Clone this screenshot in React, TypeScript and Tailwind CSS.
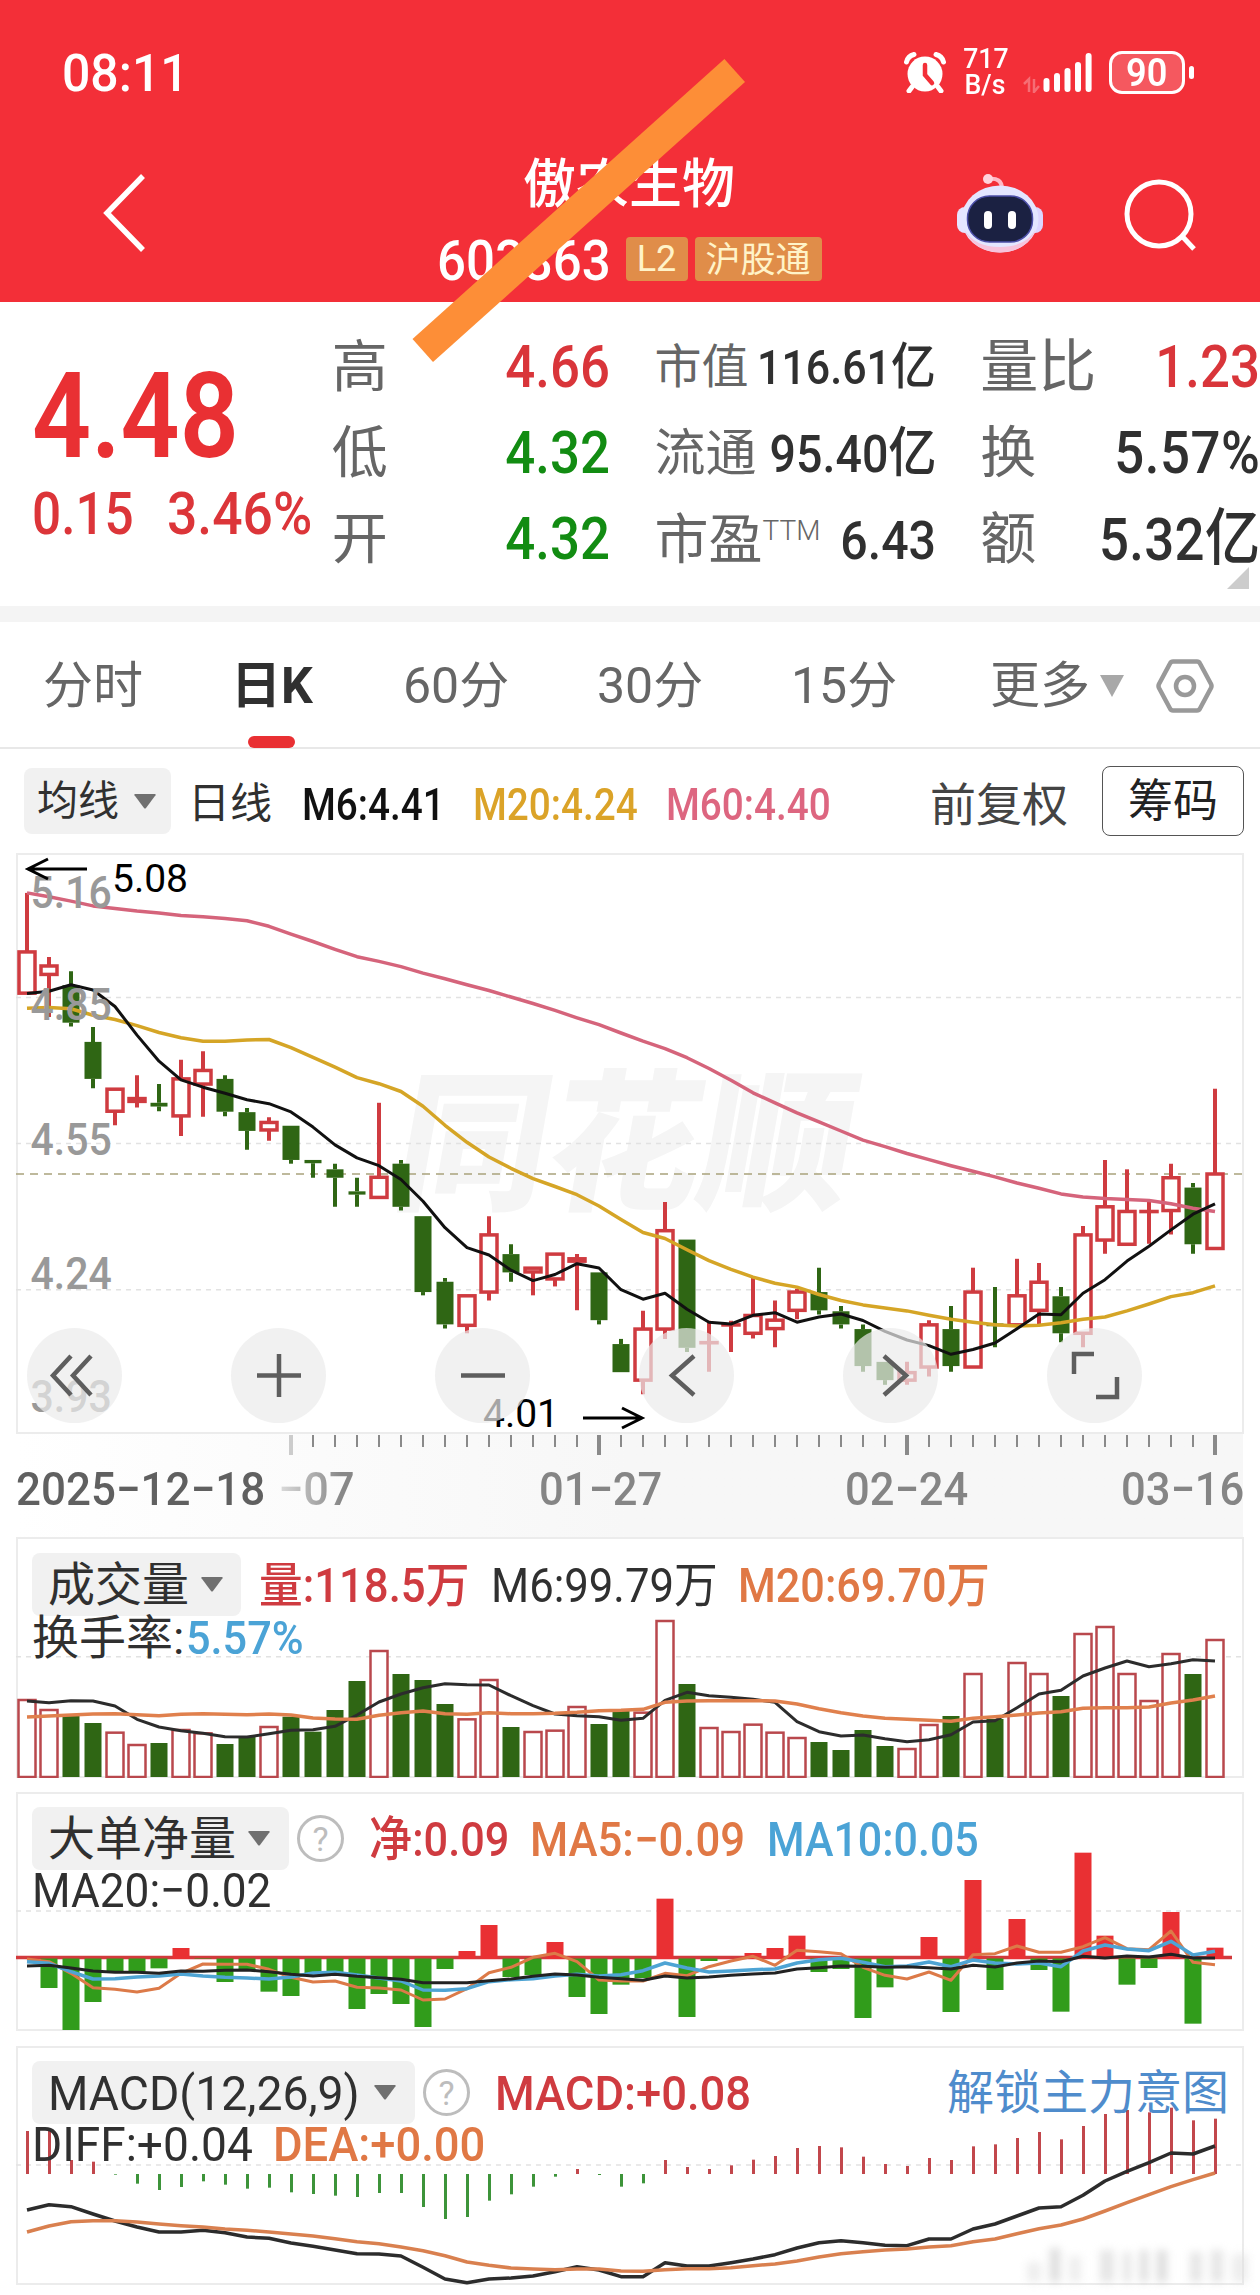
import type { ReactNode } from 'react';

type Candle = [up: 0 | 1, high: number, top: number, bottom: number, low: number];

const RED = '#cf3b40';
const GREEN = '#2f6614';
const STEP = 22;
const cx = (i: number) => 11 + i * STEP;

// price -> y inside the K line panel
const py = (p: number) => 39.9 + (5.08 - p) * 468.5;
// averages are stored on the chart's own sampling grid
const ky = (v: number) => v / 2.306 - 13;

const candles: Candle[] = [
  [1, 5.08, 4.954, 4.866, 4.866], [1, 4.943, 4.924, 4.906, 4.815], [0, 4.913, 4.883, 4.803, 4.795],
  [0, 4.794, 4.762, 4.683, 4.663], [1, 4.661, 4.661, 4.614, 4.584], [1, 4.691, 4.641, 4.635, 4.622],
  [0, 4.672, 4.632, 4.624, 4.614], [1, 4.724, 4.683, 4.604, 4.561], [1, 4.742, 4.701, 4.672, 4.602],
  [0, 4.691, 4.683, 4.613, 4.603], [0, 4.621, 4.612, 4.572, 4.532], [1, 4.601, 4.59, 4.574, 4.551],
  [0, 4.583, 4.583, 4.51, 4.502], [0, 4.51, 4.51, 4.503, 4.472], [0, 4.502, 4.49, 4.472, 4.41],
  [0, 4.472, 4.443, 4.436, 4.41], [1, 4.632, 4.473, 4.43, 4.43], [0, 4.51, 4.502, 4.41, 4.402],
  [0, 4.39, 4.39, 4.228, 4.221], [0, 4.258, 4.25, 4.159, 4.15], [1, 4.22, 4.22, 4.157, 4.14],
  [1, 4.39, 4.35, 4.228, 4.21], [0, 4.33, 4.309, 4.27, 4.25], [1, 4.279, 4.279, 4.271, 4.221],
  [1, 4.309, 4.309, 4.256, 4.24], [1, 4.309, 4.299, 4.294, 4.189], [0, 4.27, 4.27, 4.168, 4.159],
  [0, 4.128, 4.117, 4.057, 4.057], [1, 4.188, 4.149, 4.04, 4.01], [1, 4.42, 4.359, 4.149, 4.128],
  [0, 4.34, 4.34, 4.109, 4.1], [1, 4.167, 4.12, 4.12, 4.058], [1, 4.167, 4.158, 4.158, 4.1],
  [1, 4.258, 4.178, 4.14, 4.129], [1, 4.21, 4.168, 4.15, 4.11], [1, 4.235, 4.228, 4.189, 4.17],
  [0, 4.28, 4.228, 4.189, 4.18], [0, 4.198, 4.187, 4.159, 4.15], [0, 4.159, 4.149, 4.07, 4.058],
  [0, 4.079, 4.079, 4.04, 4.03], [1, 4.079, 4.056, 4.04, 4.03], [1, 4.168, 4.158, 4.068, 4.048],
  [0, 4.198, 4.149, 4.07, 4.058], [1, 4.28, 4.228, 4.068, 4.068], [0, 4.239, 4.161, 4.155, 4.11],
  [1, 4.299, 4.22, 4.158, 4.158], [1, 4.29, 4.249, 4.189, 4.158], [0, 4.239, 4.219, 4.14, 4.121],
  [1, 4.369, 4.35, 4.14, 4.11], [1, 4.51, 4.41, 4.339, 4.31], [1, 4.49, 4.4, 4.33, 4.33],
  [1, 4.42, 4.4, 4.4, 4.331], [1, 4.502, 4.472, 4.402, 4.351], [0, 4.461, 4.451, 4.33, 4.31],
  [1, 4.662, 4.48, 4.321, 4.321],
];

const m6 = [354, 349, 334, 346, 384, 450, 510, 553, 570, 584, 599, 608, 627, 662, 703, 733, 751, 783, 833, 894, 940, 957, 992, 1016, 1002, 977, 987, 1037, 1059, 1045, 1082, 1112, 1116, 1096, 1090, 1112, 1100, 1093, 1108, 1133, 1153, 1166, 1186, 1175, 1160, 1127, 1093, 1095, 1045, 1014, 971, 937, 899, 863, 839];
const m20 = [388, 386, 389, 404, 414, 428, 444, 456, 464, 464, 461, 460, 479, 501, 524, 548, 562, 580, 614, 658, 697, 731, 757, 781, 799, 818, 844, 875, 905, 919, 945, 970, 990, 1008, 1022, 1031, 1048, 1062, 1072, 1079, 1086, 1096, 1105, 1112, 1118, 1121, 1119, 1113, 1105, 1100, 1086, 1070, 1053, 1044, 1028];
const m60 = [122, 131, 141, 152, 158, 164, 168, 174, 177, 181, 186, 199, 217, 234, 252, 269, 280, 292, 307, 320, 334, 347, 362, 377, 393, 410, 426, 445, 464, 481, 502, 527, 554, 583, 606, 629, 650, 671, 692, 707, 723, 737, 751, 764, 777, 791, 803, 816, 823, 827, 829, 831, 839, 849, 857];

const vol = [537, 567, 585, 609, 635, 672, 669, 627, 637, 672, 651, 618, 590, 635, 570, 483, 390, 462, 480, 552, 595, 477, 621, 633, 629, 558, 612, 573, 575, 300, 492, 621, 633, 611, 635, 651, 666, 690, 630, 678, 684, 612, 588, 459, 597, 426, 459, 528, 339, 318, 459, 540, 399, 462, 357];
const volM6 = [543, 548, 542, 543, 558, 598, 621, 632, 640, 650, 651, 641, 631, 629, 619, 585, 546, 522, 503, 491, 494, 495, 527, 557, 582, 587, 590, 601, 595, 541, 517, 527, 532, 538, 547, 605, 635, 648, 645, 656, 665, 659, 644, 606, 602, 563, 522, 511, 468, 444, 423, 440, 431, 419, 423];
const volM20 = [591, 588, 585, 582, 581, 584, 587, 583, 581, 583, 584, 582, 585, 594, 597, 598, 586, 578, 573, 581, 583, 578, 581, 581, 580, 577, 572, 571, 568, 547, 543, 542, 542, 542, 543, 552, 566, 578, 588, 595, 598, 601, 604, 595, 590, 585, 579, 575, 565, 563, 563, 561, 549, 540, 528];

const net = [533, 624, 750, 666, 579, 575, 565, 504, 537, 606, 570, 635, 648, 579, 585, 687, 642, 672, 741, 567, 513, 435, 591, 585, 486, 651, 702, 614, 594, 356, 711, 543, 533, 519, 504, 467, 576, 567, 714, 622, 533, 471, 696, 300, 630, 417, 570, 695, 218, 467, 614, 564, 396, 731, 503];
const netM5 = [537, 545, 580, 623, 628, 636, 625, 580, 552, 553, 553, 568, 592, 606, 603, 622, 624, 630, 660, 657, 626, 578, 562, 532, 520, 545, 600, 603, 603, 580, 587, 560, 543, 529, 556, 511, 515, 521, 562, 586, 597, 576, 601, 524, 521, 498, 517, 517, 500, 473, 506, 509, 453, 547, 554];
const netM10 = [545, 550, 575, 597, 596, 591, 588, 582, 588, 592, 594, 597, 591, 579, 577, 585, 594, 603, 630, 631, 626, 605, 599, 596, 588, 583, 588, 584, 572, 549, 564, 576, 573, 569, 567, 549, 539, 535, 547, 560, 558, 546, 560, 540, 549, 552, 549, 560, 513, 495, 507, 512, 484, 525, 514];
const netM20 = [558, 556, 564, 573, 577, 577, 580, 573, 574, 571, 570, 575, 583, 588, 583, 589, 593, 598, 608, 608, 608, 602, 597, 589, 582, 585, 592, 596, 601, 588, 594, 591, 586, 582, 579, 567, 563, 558, 559, 562, 560, 563, 567, 556, 561, 549, 543, 545, 529, 534, 528, 531, 523, 534, 534];

const macd = [1053, 1047, 1140, 1145, 1184, 1211, 1230, 1221, 1204, 1214, 1226, 1223, 1237, 1242, 1247, 1251, 1239, 1239, 1281, 1317, 1311, 1262, 1243, 1220, 1190, 1167, 1185, 1220, 1210, 1140, 1161, 1167, 1156, 1139, 1128, 1104, 1098, 1102, 1130, 1152, 1158, 1134, 1140, 1099, 1093, 1074, 1056, 1078, 1038, 1002, 990, 997, 983, 1021, 1016];
const diff = [1290, 1274, 1280, 1302, 1323, 1341, 1356, 1356, 1351, 1358, 1371, 1375, 1389, 1399, 1410, 1421, 1422, 1428, 1462, 1497, 1508, 1497, 1494, 1488, 1475, 1460, 1470, 1490, 1490, 1448, 1458, 1458, 1448, 1437, 1424, 1404, 1388, 1382, 1388, 1396, 1397, 1377, 1377, 1347, 1332, 1308, 1284, 1280, 1246, 1203, 1174, 1148, 1119, 1122, 1098];
const dea = [1356, 1338, 1325, 1322, 1322, 1326, 1332, 1337, 1341, 1347, 1351, 1356, 1362, 1368, 1376, 1385, 1391, 1401, 1412, 1427, 1446, 1456, 1464, 1467, 1469, 1467, 1467, 1473, 1474, 1469, 1466, 1466, 1463, 1457, 1452, 1443, 1431, 1421, 1415, 1410, 1407, 1401, 1397, 1385, 1377, 1361, 1346, 1335, 1317, 1293, 1268, 1244, 1220, 1199, 1179];

function Line({ data, y, color, w = 3.5 }: { data: number[]; y: (v: number) => number; color: string; w?: number }) {
  return (
    <polyline
      points={data.map((v, i) => `${cx(i)},${y(v).toFixed(1)}`).join(' ')}
      fill="none"
      stroke={color}
      strokeWidth={w}
      strokeLinejoin="round"
    />
  );
}

function Grid({ y, color = '#e2e2e2', dash = '5 5' }: { y: number; color?: string; dash?: string }) {
  return <line x1="0" x2="1227" y1={y} y2={y} stroke={color} strokeWidth="1.5" strokeDasharray={dash} />;
}

function Caret({ className = '' }: { className?: string }) {
  return (
    <svg viewBox="0 0 22 15" className={`w-[22px] h-[15px] shrink-0 ${className}`}>
      <path d="M1 0h20q1 0 .5 1.2L12 14q-1 1.2-2 0L.5 1.2Q0 0 1 0Z" fill="currentColor" />
    </svg>
  );
}

function Help({ className = '' }: { className?: string }) {
  return (
    <div className={`w-[47px] h-[47px] shrink-0 rounded-full border-3 border-[#bdbdbd] text-[#bdbdbd] text-[34px] flex items-center justify-center ${className}`}>
      ?
    </div>
  );
}

function Panel({ className, children }: { className: string; children: ReactNode }) {
  return (
    <div className={`relative ml-4 w-[1228px] shadow-[inset_0_0_0_2px_#ececec] ${className}`}>{children}</div>
  );
}

function Header() {
  return (
    <header className="relative h-[302px] bg-[#f32f38] text-white">
      {/* Status bar */}
      <div className="flex items-center h-[144px] pl-[62px]">
        <span className="w-[842px] pt-[4px] text-[52px] leading-none font-medium origin-left scale-x-[.96]">08:11</span>
        <svg viewBox="0 0 42 42" className="w-[42px] h-[42px]">
          <circle cx="21" cy="23" r="17.5" fill="#fff" />
          <path d="M2.5 11Q4 5 10 3.500M39.500 11Q38 5 32 3.500M8 36l-3 4M34 36l3 4" stroke="#fff" strokeWidth="5" strokeLinecap="round" fill="none" />
          <path d="M21 14v10l7 8" stroke="#f32f38" strokeWidth="4.500" strokeLinecap="round" fill="none" />
        </svg>
        <div className="ml-[16px] w-[46px] text-[28px] leading-[28px] text-center scale-x-[.95] font-medium">
          <div>717</div>
          <div className="-mt-[2px]">B/s</div>
        </div>
        <svg viewBox="0 0 72 42" className="ml-[15px] w-[72px] h-[42px]">
          <g stroke="#fff" strokeOpacity=".3" strokeWidth="2.500" fill="none">
            <path d="M1 33l5-5v13M11 28v13l5-6" />
          </g>
          <g stroke="#fff" strokeWidth="6" strokeLinecap="round">
            <path d="M23.500 30v8M34 25v13M44.500 20v18M55 14v24M65.600 5v33" />
          </g>
        </svg>
        <div className="ml-[14px] w-[76px] h-[43px] rounded-[13px] border-[3.500px] border-white bg-white/20 flex items-center justify-center text-[38px] leading-none font-semibold">
          <span className="scale-x-[.95] pt-[2px]">90</span>
        </div>
        <div className="ml-[4px] w-[5px] h-[13px] rounded-full bg-white" />
      </div>

      {/* Title bar */}
      <div className="flex pl-[103px]">
        <svg viewBox="0 0 44 80" className="mt-[29px] w-[44px] h-[80px]">
          <path d="M40 3L4 40l36 37" stroke="#fff" strokeWidth="5.500" fill="none" />
        </svg>
        <div className="ml-[232px] w-[500px] flex flex-col items-center">
          <h1 className="mt-[15px] text-[53px] leading-none font-medium">傲农生物</h1>
          <div className="mt-[25px] flex items-center h-[44px] w-[385px]">
            <span className="w-[189px] shrink-0 pt-[3px] text-[56px] leading-none font-medium origin-left scale-x-[.91]">603363</span>
            <span className="w-[62px] h-[44px] rounded-[4px] bg-[#e08d49] text-[#fff3c8] text-[36px] leading-[45px] text-center">L2</span>
            <span className="ml-[7px] w-[127px] h-[44px] rounded-[4px] bg-[#e08d49] text-[#fff3c8] text-[35px] leading-[47px] text-center">沪股通</span>
          </div>
        </div>
        <svg viewBox="0 0 86 80" className="ml-[78px] mt-[29px] w-[86px] h-[80px]">
          <path d="M31 6q14-2 14 10" stroke="#ffb9c6" strokeWidth="4" fill="none" />
          <circle cx="31" cy="6" r="5" fill="#ffd3dc" />
          <rect x="0" y="34" width="16" height="26" rx="8" fill="#e6e4ff" />
          <rect x="70" y="34" width="16" height="26" rx="8" fill="#dcd6ff" />
          <ellipse cx="43" cy="46" rx="38.500" ry="33.500" fill="#e4e6ff" />
          <path d="M7 56q10 23 36 23.500Q70 79 79 56q-10 18-36 18T7 56Z" fill="#f7c3dc" />
          <rect x="10.500" y="23" width="65" height="46" rx="22" fill="#1b2142" stroke="#4c4fa8" strokeWidth="1.500" />
          <rect x="27" y="38" width="8" height="18" rx="4" fill="#fff" />
          <rect x="51" y="38" width="8" height="18" rx="4" fill="#fff" />
        </svg>
        <svg viewBox="0 0 74 74" className="ml-[80px] mt-[35px] w-[74px] h-[74px]">
          <circle cx="36" cy="35" r="32" stroke="#fff" strokeWidth="5" fill="none" />
          <path d="M58 56l13 14" stroke="#fff" strokeWidth="5" />
        </svg>
      </div>

      {/* Marker stroke over the stock code */}
      <svg viewBox="0 0 340 310" className="absolute left-[410px] top-[56px] w-[340px] h-[310px] z-10">
        <path d="M314.400 3L335 26 23 306 2.500 283Z" fill="#fd8e37" />
      </svg>
    </header>
  );
}

function Row({ className = '', label, children }: { className?: string; label: ReactNode; children: ReactNode }) {
  return (
    <div className={`flex justify-between whitespace-nowrap ${className}`}>
      {label}
      {/* the digits are condensed towards the right edge, so the box may reach under the label */}
      <span className="-ml-10 origin-right scale-x-[.895]">{children}</span>
    </div>
  );
}

function Quote() {
  const big = 'text-[56px] font-normal text-[#666]';
  const mid = 'font-normal text-[#666]';
  return (
    <section className="relative flex h-[304px] text-[#303030]">
      <div className="w-[333px] pl-[32px] pt-[56px] text-[#e93033]">
        <div className="text-[119px] leading-[118px] font-semibold origin-left scale-x-[.87]">4.48</div>
        <div className="mt-[8px] flex text-[59px] leading-[59px] font-medium text-[#dc3539]">
          <span className="w-[135px] origin-left scale-x-[.87]">0.15</span>
          <span className="origin-left scale-x-[.905]">3.46%</span>
        </div>
      </div>
      <div className="w-[279px] -ml-px pt-[22px] text-[59px] leading-[86px] font-medium">
        <Row className="text-[#d9353a]" label={<span className={big}>高</span>}>4.66</Row>
        <Row className="text-[#128c12]" label={<span className={big}>低</span>}>4.32</Row>
        <Row className="text-[#128c12]" label={<span className={big}>开</span>}>4.32</Row>
      </div>
      <div className="ml-[44px] w-[282px] pt-[22px] leading-[86px] font-medium">
        <Row className="text-[48px]" label={<span className="text-[47px] font-normal text-[#666]">市值</span>}>116.61<span className="text-[50px]">亿</span></Row>
        <Row className="text-[52px]" label={<span className="text-[51px] font-normal text-[#666]">流通</span>}>95.40<span className="text-[54px]">亿</span></Row>
        <Row
          className="text-[54px]"
          label={
            <span className={`flex ${mid}`}>
              市盈<span className="text-[28px] leading-[66px] font-light">TTM</span>
            </span>
          }
        >
          6.43
        </Row>
      </div>
      <div className="ml-[44px] w-[280px] pt-[22px] text-[59px] leading-[86px] font-medium">
        <Row className="text-[#d9353a]" label={<span className="text-[58px] font-normal text-[#666]">量比</span>}>1.23</Row>
        <Row label={<span className={big}>换</span>}><span className="tracking-[.01em]">5.57%</span></Row>
        <Row label={<span className={big}>额</span>}><span className="tracking-[.005em]">5.32<span className="text-[62px]">亿</span></span></Row>
      </div>
      <svg viewBox="0 0 22 22" className="absolute right-[11px] bottom-[17px] w-[22px] h-[22px]">
        <path d="M22 0v22H0Z" fill="#ccc" />
      </svg>
    </section>
  );
}

function Tabs() {
  return (
    <nav className="flex items-center h-[127px] pt-[5px] pl-[43px] pb-[2px] border-b-2 border-[#e8e8e8] text-[50px] leading-none text-[#666]">
      <span className="w-[188px]">分时</span>
      <span className="relative w-[172px] font-bold text-[#303030]">
        日K
        <span className="absolute left-[17px] top-[75px] w-[47px] h-[12px] rounded-full bg-[#e93033]" />
      </span>
      <span className="w-[194px]">60分</span>
      <span className="w-[194px]">30分</span>
      <span className="w-[199px]">15分</span>
      <span className="w-[109px]">更多</span>
      <svg viewBox="0 0 26 22" className="w-[26px] h-[22px]">
        <path d="M1 0h24l-12 22Z" fill="#a8a8a8" />
      </svg>
      <svg viewBox="0 0 58 54" className="ml-[31px] w-[58px] h-[54px]">
        <path d="M17 2.500h24q2 0 3 2L55 25q1 2 0 4L44 49.500q-1 2-3 2H17q-2 0-3-2L3 29q-1-2 0-4L14 4.500q1-2 3-2Z" stroke="#999" strokeWidth="4.500" fill="none" />
        <circle cx="29" cy="27" r="9" stroke="#999" strokeWidth="4.500" fill="none" />
      </svg>
    </nav>
  );
}

function Legend() {
  return (
    <div className="flex items-center h-[104px] pl-[24px] text-[44px] leading-none font-medium whitespace-nowrap">
      <div className="flex items-center w-[147px] h-[66px] rounded-[8px] bg-[#f1f1f1] pl-[13px] text-[41px] font-normal text-[#303030]">
        均线
        <Caret className="ml-[15px] text-[#707070]" />
      </div>
      <span className="ml-[17px] w-[114px] pt-[6px] text-[42px] font-normal text-[#303030]">日线</span>
      <span className="w-[171px] pt-[7px] text-[#111] origin-left scale-x-[.88]">M6:4.41</span>
      <span className="w-[193px] pt-[7px] text-[#dba328] origin-left scale-x-[.88]">M20:4.24</span>
      <span className="w-[264px] pt-[7px] text-[#dd6680] origin-left scale-x-[.88]">M60:4.40</span>
      <span className="w-[172px] pt-[8px] text-[46px] font-normal text-[#444]">前复权</span>
      <div className="w-[142px] h-[70px] rounded-[8px] border-[1.500px] border-[#555] text-[45px] leading-[70px] text-center font-normal text-[#222]">筹码</div>
    </div>
  );
}

const priceLabels: [string, number][] = [['5.16', 55], ['4.85', 167], ['4.55', 302], ['4.24', 436], ['3.93', 559]];
const buttons = [
  'M44 28L26 47.500 44 67M64 28L46 47.500 64 67',
  'M26 47.500h44M48 26v43',
  'M26 47.500h44',
  'M55 28L33 47.500 55 67',
  'M41 28L63 47.500 41 67',
  'M47 26H27v20M49 69h21V49',
];

function KLine() {
  return (
    <Panel className="h-[581px]">
      <svg viewBox="0 0 1227 581" className="absolute inset-0 w-[1227px] h-[581px]">
        <text x="388" y="345" fontSize="152" fontWeight="900" fill="#f5f5f5" textLength="456" transform="translate(46 0) skewX(-10)">同花顺</text>
        <Grid y={144.400} />
        <Grid y={290.600} />
        <Grid y={436.700} />
        <Grid y={321} color="#a9a27c" dash="8 6" />
        {candles.map(([up, h, t, b, l], i) => {
          const x = cx(i);
          const color = up ? RED : GREEN;
          return (
            <g key={i} fill={color} stroke={color}>
              <path d={`M${x} ${py(h)}V${py(t)}M${x} ${py(b)}V${py(l)}`} strokeWidth="4" />
              {up ? (
                <rect x={x - 8} y={py(t)} width="16" height={Math.max(0.1, py(b) - py(t))} fill="#fff" strokeWidth="3.500" />
              ) : (
                <rect x={x - 8.500} y={py(t)} width="17" height={py(b) - py(t)} stroke="none" />
              )}
            </g>
          );
        })}
        <Line data={m60} y={ky} color="#d5647b" />
        <Line data={m20} y={ky} color="#d5a526" />
        <Line data={m6} y={ky} color="#111" w={3} />
        <g fontSize="45" fontWeight="500" fill="#999" transform="scale(.91 1)">
          {priceLabels.map(([s, y]) => (
            <text key={s} x="16" y={y}>{s}</text>
          ))}
        </g>
        <g fontSize="39" fill="#000">
          <text x="96" y="39">5.08</text>
          <text x="467" y="574">4.01</text>
        </g>
        <path d="M71 16H12M32 6L12 16 32 26M567 565h59M606 555l20 10-20 10" stroke="#000" strokeWidth="3" fill="none" />
      </svg>
      <div className="absolute left-[11px] top-[475px] flex gap-[109px]">
        {buttons.map((d) => (
          <svg key={d} viewBox="0 0 95 95" className="w-[95px] h-[95px] rounded-full bg-[#ebebeb]/70">
            <path d={d} stroke="#5e5e5e" strokeWidth="4.500" fill="none" />
          </svg>
        ))}
      </div>
    </Panel>
  );
}

function DateAxis() {
  return (
    <div className="ml-4 w-[1227px] h-[103px] bg-gradient-to-r from-white via-[#f7f7f7] to-[#f7f7f7] text-[46px] leading-none font-medium text-[#858585]">
      <svg viewBox="0 0 1227 22" className="block w-[1227px] h-[22px]">
        {candles.map((_, i) => {
          if (i < 12) return null;
          const major = (i - 12) % 14 === 0;
          return (
            <line key={i} x1={cx(i)} x2={cx(i)} y1="1" y2={major ? 21 : 13} stroke={i === 12 ? '#ccc' : '#8a8a8a'} strokeWidth={major ? 4 : 2} />
          );
        })}
      </svg>
      <div className="flex mt-[10px] leading-[46px] whitespace-nowrap">
        <span className="w-[263px] text-[#606060] origin-left scale-x-[.955]">2025−12−18</span>
        <span className="w-[258px] text-transparent bg-clip-text bg-gradient-to-r from-[#ddd] from-0% to-[#888] to-25% origin-left scale-x-[.98]">−07</span>
        <span className="ml-[4px] w-[307px] origin-left scale-x-[.945]">01−27</span>
        <span className="w-[277px] origin-left scale-x-[.945]">02−24</span>
        <span className="w-[122px] origin-left scale-x-[.945]">03−16</span>
      </div>
    </div>
  );
}

function Volume() {
  const y = (v: number) => v / 3 - 17;
  return (
    <Panel className="h-[241px]">
      <svg viewBox="0 0 1227 241" className="absolute inset-0 w-[1227px] h-[241px]">
        <Grid y={119.700} />
        {vol.map((v, i) =>
          candles[i][0] ? (
            <rect key={i} x={cx(i) - 8.500} y={y(v) + 1} width="17" height={239 - y(v)} fill="#fff" stroke="#b9484d" strokeWidth="2.500" />
          ) : (
            <rect key={i} x={cx(i) - 8.500} y={y(v)} width="17" height={240 - y(v)} fill={GREEN} />
          ),
        )}
        <Line data={volM6} y={y} color="#2c2c2c" w={3} />
        <Line data={volM20} y={y} color="#e0804d" />
      </svg>
      <div className="relative pl-[16px] pt-[16px] text-[48px] leading-none text-[#303030] whitespace-nowrap">
        <div className="flex items-center h-[63px]">
          <div className="flex items-center w-[209px] h-[63px] rounded-[8px] bg-[#f1f1f1] pl-[16px] text-[47px]">
            成交量
            <Caret className="ml-[12px] text-[#707070]" />
          </div>
          <span className="ml-[18px] w-[232px] pt-[2px] text-[#cf3b40] font-medium origin-left scale-x-[.91]">量:118.5万</span>
          <span className="w-[247px] pt-[2px] origin-left scale-x-[.91]">M6:99.79万</span>
          <span className="pt-[2px] text-[#e07845] font-medium origin-left scale-x-[.9]">M20:69.70万</span>
        </div>
        <div className="flex -mt-[2px] text-[47px]">
          <span className="w-[154px]">换手率:</span>
          <span className="text-[#4ba3d6] font-medium origin-left scale-x-[.92]">5.57%</span>
        </div>
      </div>
    </Panel>
  );
}

function NetVolume() {
  const y = (v: number) => v / 3 - 12;
  const zero = 165.500;
  return (
    <Panel className="mt-[14px] h-[239px]">
      <svg viewBox="0 0 1227 239" className="absolute inset-0 w-[1227px] h-[239px]">
        <Grid y={119} />
        <line x1="0" x2="1216" y1={zero} y2={zero} stroke="#d23a3c" strokeWidth="3.500" />
        {net.map((v, i) => (
          <rect
            key={i}
            x={cx(i) - 8.500}
            y={v < 533 ? y(v) : zero + 1}
            width="17"
            height={Math.max(0, v < 533 ? zero + 1.500 - y(v) : y(v) - zero - 1)}
            fill={v < 533 ? '#e93033' : '#319c1b'}
          />
        ))}
        <Line data={netM5} y={y} color="#dc7a48" w={3} />
        <Line data={netM10} y={y} color="#4ea4d4" />
        <Line data={netM20} y={y} color="#222" w={3} />
      </svg>
      <div className="relative pl-[16px] pt-[15px] text-[48px] leading-none text-[#303030] whitespace-nowrap">
        <div className="flex items-center h-[63px]">
          <div className="flex items-center w-[257px] h-[63px] rounded-[8px] bg-[#f1f1f1] pl-[16px] text-[47px]">
            大单净量
            <Caret className="ml-[12px] text-[#707070]" />
          </div>
          <Help className="ml-[8px]" />
          <span className="ml-[25px] w-[161px] pt-[2px] text-[#cf3b40] font-medium origin-left scale-x-[.9]">净:0.09</span>
          <span className="w-[237px] pt-[2px] text-[#e07845] font-medium origin-left scale-x-[.91]">MA5:−0.09</span>
          <span className="pt-[2px] text-[#4ba3d6] font-medium origin-left scale-x-[.895]">MA10:0.05</span>
        </div>
        <div className="-mt-[3px] origin-left scale-x-[.92]">MA20:−0.02</div>
      </div>
    </Panel>
  );
}

function Macd() {
  const y = (v: number) => v / 3 - 266;
  const zero = y(1182);
  return (
    <Panel className="mt-[15px] h-[239px]">
      <svg viewBox="0 0 1227 239" className="absolute inset-0 w-[1227px] h-[239px]">
        <Grid y={119} />
        {macd.map((v, i) => (
          <line key={i} x1={cx(i) + 0.500} x2={cx(i) + 0.500} y1={zero} y2={y(v)} stroke={v < 1182 ? '#c2474c' : '#3d943a'} strokeWidth="3" />
        ))}
        <Line data={diff} y={y} color="#2c2c2c" />
        <Line data={dea} y={y} color="#d9804f" />
      </svg>
      <div className="relative pl-[16px] pt-[15px] text-[48px] leading-none text-[#303030] whitespace-nowrap">
        <div className="flex items-center h-[63px]">
          <div className="flex items-center w-[383px] h-[63px] rounded-[8px] bg-[#f1f1f1] pl-[16px]">
            <span className="w-[326px] pt-[2px] origin-left scale-x-[.965]">MACD(12,26,9)</span>
            <Caret className="text-[#707070]" />
          </div>
          <Help className="ml-[8px]" />
          <span className="ml-[25px] w-[452px] pt-[2px] text-[#cf3b40] font-medium origin-left scale-x-[.945]">MACD:+0.08</span>
          <a className="text-[47px] text-[#4f8ccc]">解锁主力意图</a>
        </div>
        <div className="flex -mt-[3px]">
          <span className="w-[241px] origin-left scale-x-[.96]">DIFF:+0.04</span>
          <span className="text-[#e07845] font-medium origin-left scale-x-[.945]">DEA:+0.00</span>
        </div>
      </div>
      {/* Faded author mark */}
      <div className="absolute right-[-4px] bottom-[3px] flex items-end gap-[9px] blur-[4px] opacity-50">
        <div className="w-[14px] h-[20px] bg-[#ddd]" />
        <div className="w-[10px] h-[34px] bg-[#bbb]" />
        <div className="w-[12px] h-[26px] bg-[#ddd] mr-[10px]" />
        <div className="w-[14px] h-[32px] bg-[#ccc]" />
        <div className="w-[8px] h-[30px] bg-[#ccc]" />
        <div className="w-[8px] h-[32px] bg-[#bbb]" />
        <div className="w-[10px] h-[32px] bg-[#bbb] mr-[14px]" />
        <div className="w-[12px] h-[30px] bg-[#ccc]" />
        <div className="w-[12px] h-[32px] bg-[#ccc]" />
        <div className="w-[16px] h-[28px] bg-[#ddd]" />
      </div>
    </Panel>
  );
}

export default function App() {
  return (
    <div className="w-[1260px] h-[2295px] overflow-hidden bg-white font-['Roboto','Noto_Sans_CJK_SC',sans-serif]">
      <Header />
      <Quote />
      <div className="h-[16px] bg-[#f4f4f4]" />
      <Tabs />
      <Legend />
      <KLine />
      <DateAxis />
      <Volume />
      <NetVolume />
      <Macd />
    </div>
  );
}
